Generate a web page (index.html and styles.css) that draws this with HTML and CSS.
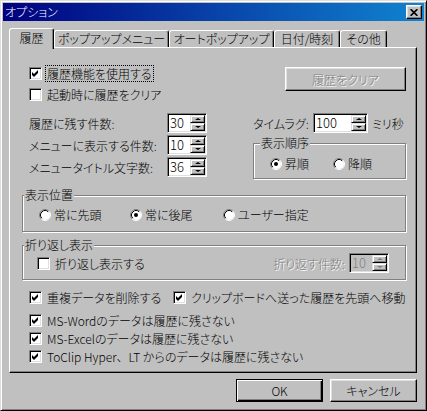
FILE: index.html
```html
<!DOCTYPE html>
<html lang="ja">
<head>
<meta charset="UTF-8">
<title>オプション</title>
<link rel="stylesheet" href="styles.css">
</head>
<body>

<div class="window">
  <div class="titlebar">
    <span class="title">オプション</span>
    <span class="close-btn">
      <svg width="8" height="7" viewBox="0 0 8 7"><path d="M0.6 0.2 L7.4 6.8 M7.4 0.2 L0.6 6.8" stroke="#000" stroke-width="1.7"/></svg>
    </span>
  </div>

  <div class="tabs">
    <div class="tab tab-history active">履歴</div>
    <div class="tab tab-popup">ポップアップメニュー</div>
    <div class="tab tab-auto">オートポップアップ</div>
    <div class="tab tab-date">日付/時刻</div>
    <div class="tab tab-other">その他</div>
  </div>

  <div class="panel">
    <div class="top">
      <div class="left">
        <label class="check">
          <span class="box"><svg width="9" height="9" viewBox="0 0 9 9"><path d="M1 3 L3 5 L7 1 L7 4 L3 8 L1 6 Z" fill="#000"/></svg></span>
          <span class="focus">履歴機能を使用する</span>
        </label>
        <label class="check check-second">
          <span class="box"></span>
          <span>起動時に履歴をクリア</span>
        </label>

        <div class="counts">
          <span>履歴に残す件数:</span>
          <span class="spin"><span class="spin-val">30</span><span class="spin-btns"><span class="up"></span><span class="down"></span></span></span>
          <span>メニューに表示する件数:</span>
          <span class="spin"><span class="spin-val">10</span><span class="spin-btns"><span class="up"></span><span class="down"></span></span></span>
          <span>メニュータイトル文字数:</span>
          <span class="spin"><span class="spin-val">36</span><span class="spin-btns"><span class="up"></span><span class="down"></span></span></span>
        </div>
      </div>

      <div class="right">
        <button class="btn btn-clear" disabled>履歴をクリア</button>
        <div class="lag">
          <span>タイムラグ:</span>
          <span class="spin spin-wide"><span class="spin-val">100</span><span class="spin-btns"><span class="up"></span><span class="down"></span></span></span>
          <span class="unit">ミリ秒</span>
        </div>
        <div class="group group-order">
          <span class="legend legend-order">表示順序</span>
          <div class="radios radios-order">
            <span class="radio">
              <svg width="12" height="12" viewBox="0 0 12 12"><circle cx="6" cy="6" r="5" fill="#fff"/><path d="M2.11 9.89 A5.5 5.5 0 0 1 9.89 2.11" fill="none" stroke="#808080"/><path d="M2.82 9.18 A4.5 4.5 0 0 1 9.18 2.82" fill="none" stroke="#000"/><path d="M9.89 2.11 A5.5 5.5 0 0 1 2.11 9.89" fill="none" stroke="#fff"/><circle cx="6" cy="6" r="2" fill="#000"/></svg>
              昇順
            </span>
            <span class="radio">
              <svg width="12" height="12" viewBox="0 0 12 12"><circle cx="6" cy="6" r="5" fill="#fff"/><path d="M2.11 9.89 A5.5 5.5 0 0 1 9.89 2.11" fill="none" stroke="#808080"/><path d="M2.82 9.18 A4.5 4.5 0 0 1 9.18 2.82" fill="none" stroke="#000"/><path d="M9.89 2.11 A5.5 5.5 0 0 1 2.11 9.89" fill="none" stroke="#fff"/></svg>
              降順
            </span>
          </div>
        </div>
      </div>
    </div>

    <div class="group group-pos">
      <span class="legend">表示位置</span>
      <div class="radios radios-pos">
        <span class="radio">
          <svg width="12" height="12" viewBox="0 0 12 12"><circle cx="6" cy="6" r="5" fill="#fff"/><path d="M2.11 9.89 A5.5 5.5 0 0 1 9.89 2.11" fill="none" stroke="#808080"/><path d="M2.82 9.18 A4.5 4.5 0 0 1 9.18 2.82" fill="none" stroke="#000"/><path d="M9.89 2.11 A5.5 5.5 0 0 1 2.11 9.89" fill="none" stroke="#fff"/></svg>
          常に先頭
        </span>
        <span class="radio">
          <svg width="12" height="12" viewBox="0 0 12 12"><circle cx="6" cy="6" r="5" fill="#fff"/><path d="M2.11 9.89 A5.5 5.5 0 0 1 9.89 2.11" fill="none" stroke="#808080"/><path d="M2.82 9.18 A4.5 4.5 0 0 1 9.18 2.82" fill="none" stroke="#000"/><path d="M9.89 2.11 A5.5 5.5 0 0 1 2.11 9.89" fill="none" stroke="#fff"/><circle cx="6" cy="6" r="2" fill="#000"/></svg>
          常に後尾
        </span>
        <span class="radio">
          <svg width="12" height="12" viewBox="0 0 12 12"><circle cx="6" cy="6" r="5" fill="#fff"/><path d="M2.11 9.89 A5.5 5.5 0 0 1 9.89 2.11" fill="none" stroke="#808080"/><path d="M2.82 9.18 A4.5 4.5 0 0 1 9.18 2.82" fill="none" stroke="#000"/><path d="M9.89 2.11 A5.5 5.5 0 0 1 2.11 9.89" fill="none" stroke="#fff"/></svg>
          ユーザー指定
        </span>
      </div>
    </div>

    <div class="group group-wrap">
      <span class="legend">折り返し表示</span>
      <div class="wrap-row">
        <label class="check">
          <span class="box"></span>
          <span>折り返し表示する</span>
        </label>
        <div class="wrap-count">
          <span class="disabled-text">折り返す件数:</span>
          <span class="spin spin-off"><span class="spin-val">10</span><span class="spin-btns"><span class="up"></span><span class="down"></span></span></span>
        </div>
      </div>
    </div>

    <div class="checks-pair">
      <label class="check">
        <span class="box"><svg width="9" height="9" viewBox="0 0 9 9"><path d="M1 3 L3 5 L7 1 L7 4 L3 8 L1 6 Z" fill="#000"/></svg></span>
        <span>重複データを削除する</span>
      </label>
      <label class="check">
        <span class="box"><svg width="9" height="9" viewBox="0 0 9 9"><path d="M1 3 L3 5 L7 1 L7 4 L3 8 L1 6 Z" fill="#000"/></svg></span>
        <span>クリップボードへ送った履歴を先頭へ移動</span>
      </label>
    </div>

    <div class="checks-list">
      <label class="check">
        <span class="box"><svg width="9" height="9" viewBox="0 0 9 9"><path d="M1 3 L3 5 L7 1 L7 4 L3 8 L1 6 Z" fill="#000"/></svg></span>
        <span>MS-Wordのデータは履歴に残さない</span>
      </label>
      <label class="check">
        <span class="box"><svg width="9" height="9" viewBox="0 0 9 9"><path d="M1 3 L3 5 L7 1 L7 4 L3 8 L1 6 Z" fill="#000"/></svg></span>
        <span>MS-Excelのデータは履歴に残さない</span>
      </label>
      <label class="check">
        <span class="box"><svg width="9" height="9" viewBox="0 0 9 9"><path d="M1 3 L3 5 L7 1 L7 4 L3 8 L1 6 Z" fill="#000"/></svg></span>
        <span>ToClip Hyper<span class="full-comma">、</span>LT からのデータは履歴に残さない</span>
      </label>
    </div>
  </div>

  <div class="actions">
    <button class="btn btn-default">OK</button>
    <button class="btn">キャンセル</button>
  </div>
</div>

</body>
</html>
```

FILE: styles.css
```css
body {
  margin: 0;
  background: #c0c0c0;
  font-family: "Noto Sans CJK JP", sans-serif;
  font-size: 12px;
  font-weight: 300;
  font-feature-settings: "palt";
  color: #000;
}
.window {
  width: 427px;
  height: 411px;
  box-sizing: border-box;
  padding: 2px;
  border: 1px solid;
  border-color: #dfdfdf #000 #000 #dfdfdf;
  box-shadow: inset 1px 1px #fff, inset -1px -1px #808080;
  background: #c0c0c0;
}
.titlebar {
  display: flex;
  align-items: center;
  justify-content: space-between;
  height: 18px;
  padding: 0 2px 0 2px;
  background: linear-gradient(to right, #000080, #1084d0);
  color: #fff;
}
.title {
  line-height: 18px;
}
.close-btn {
  display: flex;
  align-items: center;
  justify-content: center;
  width: 16px;
  height: 14px;
  box-sizing: border-box;
  border: 1px solid;
  border-color: #fff #000 #000 #fff;
  box-shadow: inset -1px -1px #808080, inset 1px 1px #dfdfdf;
  background: #c0c0c0;
}

/* tabs */
.tabs {
  display: flex;
  align-items: flex-end;
  height: 19px;
  margin: 7px 0 0 6px;
}
.tab {
  box-sizing: border-box;
  height: 17px;
  border: 1px solid;
  border-color: #fff #000 transparent #fff;
  border-bottom: 0;
  border-radius: 3px 3px 0 0;
  box-shadow: inset -1px 0 #808080;
  line-height: 16px;
  text-align: center;
}
.tab.active {
  position: relative;
  z-index: 1;
  height: 21px;
  margin-bottom: -2px;
  background: #c0c0c0;
  line-height: 17px;
}
.tab-history { width: 45px; }
.tab-popup { width: 115px; }
.tab-auto { width: 105px; }
.tab-date { width: 66px; }
.tab-other { width: 47px; }

.panel {
  box-sizing: border-box;
  width: 408px;
  height: 326px;
  margin-left: 6px;
  padding: 19px 10px 0 12px;
  border: 1px solid;
  border-color: #fff #000 #000 #fff;
  box-shadow: inset -1px -1px #808080;
}

/* checkboxes */
.check {
  display: flex;
  align-items: center;
  gap: 5px;
  height: 13px;
  line-height: 13px;
  white-space: nowrap;
}
.box {
  display: flex;
  align-items: center;
  justify-content: center;
  flex: none;
  width: 13px;
  height: 13px;
  box-sizing: border-box;
  border: 1px solid;
  border-color: #808080 #fff #fff #808080;
  box-shadow: inset 1px 1px #000, inset -1px -1px #dfdfdf;
  background: #fff;
}
.focus {
  margin-left: -1px;
  padding: 1px 1px;
  outline: 1px dotted #000;
}
.check-second {
  margin-top: 8px;
}
.full-comma {
  font-feature-settings: normal;
}

.top {
  display: grid;
  grid-template-columns: 231px 153px;
  align-items: start;
}
.left {
  padding-left: 7px;
}
.counts {
  display: grid;
  grid-template-columns: 138px 40px;
  grid-auto-rows: 20px;
  row-gap: 2px;
  align-items: center;
  margin-top: 12px;
  white-space: nowrap;
}

/* spin boxes */
.spin {
  display: flex;
  width: 40px;
  height: 20px;
  box-sizing: border-box;
  padding: 1px;
  border: 1px solid;
  border-color: #808080 #fff #fff #808080;
  box-shadow: inset 1px 1px #000, inset -1px -1px #dfdfdf;
  background: #fff;
}
.spin-wide {
  width: 55px;
}
.spin-val {
  flex: 1;
  padding-left: 1px;
  line-height: 16px;
  font-size: 13px;
}
.spin-btns {
  display: flex;
  flex-direction: column;
  width: 15px;
}
.spin-btns span {
  display: flex;
  align-items: center;
  justify-content: center;
  flex: 1;
  box-sizing: border-box;
  border: 1px solid;
  border-color: #dfdfdf #000 #000 #dfdfdf;
  box-shadow: inset 1px 1px #fff, inset -1px -1px #808080;
  background: #c0c0c0;
}
.spin-btns span::after {
  content: "";
  border-left: 3px solid transparent;
  border-right: 3px solid transparent;
}
.spin-btns .up::after {
  border-bottom: 2px solid #000;
}
.spin-btns .down::after {
  border-top: 2px solid #000;
}
.spin-off {
  background: #c0c0c0;
  color: #808080;
}
.spin-off .spin-btns .up::after {
  border-bottom-color: #808080;
}
.spin-off .spin-btns .down::after {
  border-top-color: #808080;
}

/* buttons */
.btn {
  font: inherit;
  font-feature-settings: "palt";
  box-sizing: border-box;
  padding: 0;
  border: 1px solid;
  border-color: #fff #000 #000 #fff;
  box-shadow: inset -1px -1px #808080, inset 1px 1px #dfdfdf;
  background: #c0c0c0;
  color: #000;
}
.btn-clear {
  display: block;
  width: 121px;
  height: 24px;
  margin-left: 32px;
  color: #808080;
  text-shadow: 1px 1px #fff;
}
.btn-default {
  border-color: #000;
  box-shadow: inset 1px 1px #fff, inset -1px -1px #000, inset -2px -2px #808080;
}
.actions {
  display: flex;
  justify-content: flex-end;
  gap: 7px;
  margin-top: 6px;
  padding-right: 7px;
}
.actions .btn {
  width: 87px;
  height: 23px;
}

.lag {
  display: grid;
  grid-template-columns: 60px 55px auto;
  align-items: center;
  margin-top: 22px;
  white-space: nowrap;
}
.unit {
  margin-left: 4px;
}

/* group boxes */
.group {
  position: relative;
  box-sizing: border-box;
  border: 1px solid #808080;
  box-shadow: inset 1px 1px #fff, 1px 1px #fff;
}
.legend {
  position: absolute;
  top: -8px;
  left: 1px;
  padding: 0 1px;
  line-height: 14px;
  background: #c0c0c0;
}
.legend-order {
  left: 6px;
}
.radios {
  display: grid;
  height: 14px;
  align-items: center;
  white-space: nowrap;
}
.radio {
  display: flex;
  align-items: center;
  gap: 3px;
}
.group-order {
  height: 36px;
  margin-top: 10px;
  padding: 11px 0 0 16px;
}
.radios-order {
  grid-template-columns: 63px auto;
}
.group-pos {
  height: 37px;
  margin-top: 16px;
  padding: 10px 0 0 16px;
}
.radios-pos {
  grid-template-columns: 91px 93px auto;
}
.group-wrap {
  height: 35px;
  margin-top: 13px;
  padding: 7px 16px 0 14px;
}
.wrap-row {
  display: flex;
  align-items: center;
  height: 20px;
}
.wrap-count {
  display: flex;
  align-items: center;
  gap: 4px;
  margin-left: auto;
}
.disabled-text {
  color: #808080;
  text-shadow: 1px 1px #fff;
}

.checks-pair {
  display: grid;
  grid-template-columns: 144px auto;
  margin-top: 11px;
  padding-left: 7px;
}
.checks-list {
  display: flex;
  flex-direction: column;
  gap: 5px;
  margin-top: 10px;
  padding-left: 7px;
}
```
